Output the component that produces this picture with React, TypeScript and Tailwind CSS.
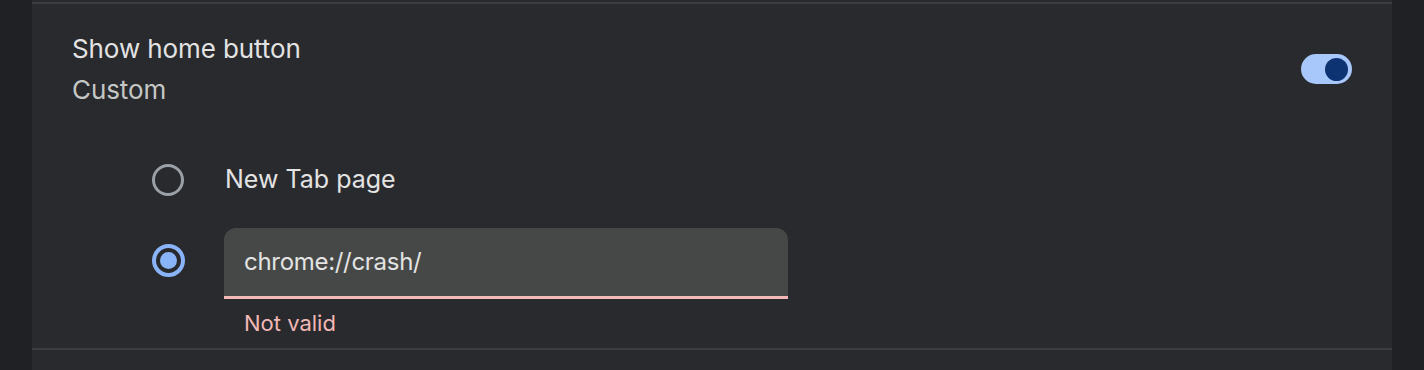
import { useState } from "react";

const font = { fontFamily: "Inter, 'Noto Sans', Roboto, sans-serif" };

function Toggle({ on }: { on: boolean }) {
  return (
    <div
      className={`w-[51px] h-[30px] rounded-full flex items-center px-[4px] ${
        on ? "bg-[#a8c7fa] justify-end" : "bg-[#5f6368] justify-start"
      }`}
    >
      <div className="w-[23px] h-[23px] rounded-full bg-[#0d3373]" />
    </div>
  );
}

function Radio({ checked }: { checked: boolean }) {
  return checked ? (
    <div className="w-[33px] h-[33px] rounded-full border-[4px] border-[#8ab4f8] flex items-center justify-center shrink-0">
      <div className="w-[17px] h-[17px] rounded-full bg-[#8ab4f8]" />
    </div>
  ) : (
    <div className="w-[32px] h-[32px] rounded-full border-[3px] border-[#9aa0a6] shrink-0" />
  );
}

export default function App() {
  const [url, setUrl] = useState("chrome://crash/");

  return (
    <div className="w-full h-[370px] bg-[#202124] flex overflow-hidden" style={font}>
      <div className="ml-[32px] w-[1360px] bg-[#292a2d] flex flex-col">
        <div className="h-[2px]" />
        <div className="h-[2px] bg-[#3c3d40]" />

        {/* Header row */}
        <div className="flex items-center justify-between pl-[40px] pr-[40px] pt-[24px]">
          <div className="text-[26px] leading-[41px] tracking-[-0.1px]">
            <div className="text-[#e3e3e3]">Show home button</div>
            <div className="text-[#c4c7c5]">Custom</div>
          </div>
          <Toggle on />
        </div>

        {/* Options */}
        <div className="pl-[120px] pt-[30px]">
          <div className="flex items-center h-[80px] gap-[41px]">
            <Radio checked={false} />
            <span className="text-[25px] text-[#e3e3e3]">New Tab page</span>
          </div>
          <div className="flex items-start gap-[39px] mt-[8px]">
            <div className="mt-[16px]">
              <Radio checked />
            </div>
            <div className="flex flex-col">
              <div className="w-[564px] h-[71px] rounded-t-[12px] bg-[#464847] border-b-[3px] border-[#f2b8b5] flex items-center px-[20px]">
                <input
                  value={url}
                  onChange={(e) => setUrl(e.target.value)}
                  className="w-full bg-transparent outline-none text-[24px] text-[#e3e3e3] tracking-[-0.3px]"
                  style={font}
                />
              </div>
              <div className="pt-[8px] pl-[20px] text-[22px] leading-[32px] text-[#f2b8b5]">
                Not valid
              </div>
            </div>
          </div>
        </div>

        <div className="mt-[9px] h-[2px] bg-[#3c3d40]" />
      </div>
    </div>
  );
}
